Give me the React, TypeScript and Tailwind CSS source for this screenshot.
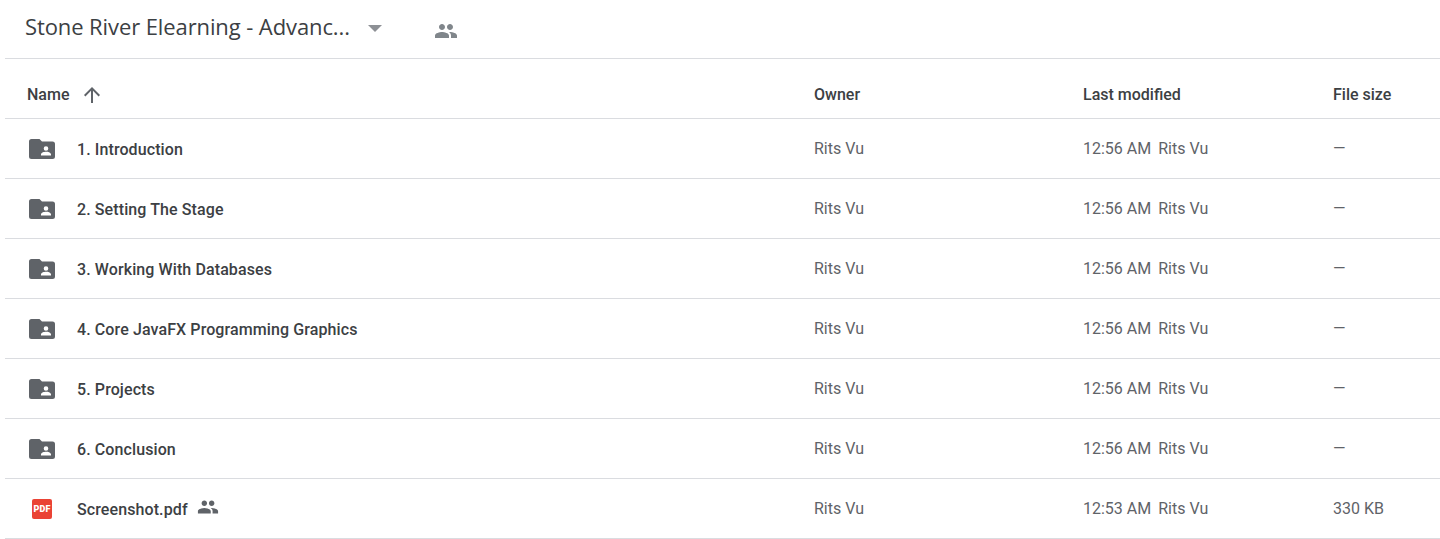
import React from "react";

const rows = [
  { name: "1. Introduction", time: "12:56 AM", size: "—" },
  { name: "2. Setting The Stage", time: "12:56 AM", size: "—" },
  { name: "3. Working With Databases", time: "12:56 AM", size: "—" },
  { name: "4. Core JavaFX Programming Graphics", time: "12:56 AM", size: "—" },
  { name: "5. Projects", time: "12:56 AM", size: "—" },
  { name: "6. Conclusion", time: "12:56 AM", size: "—" },
];

function PeopleIcon({ className }: { className: string }) {
  return (
    <svg viewBox="0 0 24 24" className={className} fill="currentColor">
      <path d="M16 11c1.66 0 2.99-1.34 2.99-3S17.66 5 16 5s-3 1.34-3 3 1.34 3 3 3zm-8 0c1.66 0 2.99-1.34 2.99-3S9.66 5 8 5 5 6.34 5 8s1.34 3 3 3zm0 2c-2.33 0-7 1.17-7 3.5V19h14v-2.5c0-2.33-4.67-3.5-7-3.5zm8 0c-.29 0-.62.02-.97.05 1.16.84 1.97 1.97 1.97 3.45V19h6v-2.5c0-2.33-4.67-3.5-7-3.5z" />
    </svg>
  );
}

function SharedFolder() {
  return (
    <svg viewBox="0 0 26 20" className="w-[26px] h-[20px] text-[#5f6368]">
      <path
        fill="currentColor"
        fillRule="evenodd"
        d="M2.5 0h8l2.5 2.5h10.5A2.5 2.5 0 0 1 26 5v12.5a2.5 2.5 0 0 1-2.5 2.5h-21A2.5 2.5 0 0 1 0 17.500V2.500A2.500 2.500 0 0 1 2.500 0zM17 7.200a2.300 2.300 0 1 0 0 4.600 2.300 2.300 0 0 0 0-4.600zM12 15.300v1.200h10v-1.200c0-1.700-3.300-2.500-5-2.500s-5 .8-5 2.500z"
      />
    </svg>
  );
}

function PdfIcon() {
  return (
    <div className="ml-[3px] w-5 h-5 rounded-[2px] bg-[#ea4335] flex items-center justify-center">
      <span className="text-white text-[9px] leading-none font-black tracking-[0.2px] font-['Roboto',sans-serif]">PDF</span>
    </div>
  );
}

function Row({ icon, name, time, size, shared }: { icon: React.ReactNode; name: string; time: string; size: string; shared?: boolean }) {
  return (
    <div className="flex h-[60px] items-center border-b border-[#dadce0] pt-px">
      <div className="w-[809px] flex items-center">
        <div className="w-[72px] pl-6 flex items-center shrink-0">{icon}</div>
        <span className="pt-[2px] text-base font-medium tracking-[0.1px] text-[#3c4043]">{name}</span>
        {shared && <PeopleIcon className="w-[22px] h-[22px] ml-[9px] mb-1 text-[#5f6368]" />}
      </div>
      <div className="w-[269px] text-base text-[#5f6368]">Rits Vu</div>
      <div className="w-[250px] text-base text-[#5f6368] flex gap-[7px]">
        <span>{time}</span>
        <span>Rits Vu</span>
      </div>
      <div className="text-base text-[#5f6368]">{size}</div>
    </div>
  );
}

export default function App() {
  return (
    <div className="min-h-[539px] bg-white pl-[5px] font-['Roboto',sans-serif]">
      {/* top bar */}
      <div className="flex h-[59px] items-center border-b border-[#dadce0] pb-[6px]">
        <span className="ml-5 text-[22px] text-[#3c4043] font-['Open_Sans',sans-serif] tracking-[-0.1px] leading-none">
          Stone River Elearning - Advanc...
        </span>
        <svg viewBox="0 0 14 7" className="ml-[18px] mt-[5px] w-[14px] h-[7px] text-[#8d9095]" fill="currentColor">
          <path d="M0 0h14L7 7z" />
        </svg>
        <PeopleIcon className="ml-[52px] mt-[9px] w-6 h-6 text-[#80868b]" />
      </div>

      {/* column headers */}
      <div className="flex h-[60px] items-center border-b border-[#dadce0] pt-[12px] text-base font-medium text-[#3c4043]">
        <div className="w-[809px] pl-[22px] flex items-center">
          <span>Name</span>
          <svg viewBox="0 0 24 24" className="ml-[11px] w-6 h-6 text-[#5f6368]" fill="currentColor">
            <path d="M4 12l1.41 1.41L11 7.830V20h2V7.830l5.580 5.590L20 12l-8-8-8 8z" />
          </svg>
        </div>
        <div className="w-[269px]">Owner</div>
        <div className="w-[250px]">Last modified</div>
        <div>File size</div>
      </div>

      {rows.map((r) => (
        <Row key={r.name} icon={<SharedFolder />} name={r.name} time={r.time} size={r.size} />
      ))}
      <Row icon={<PdfIcon />} name="Screenshot.pdf" time="12:53 AM" size="330 KB" shared />
    </div>
  );
}
